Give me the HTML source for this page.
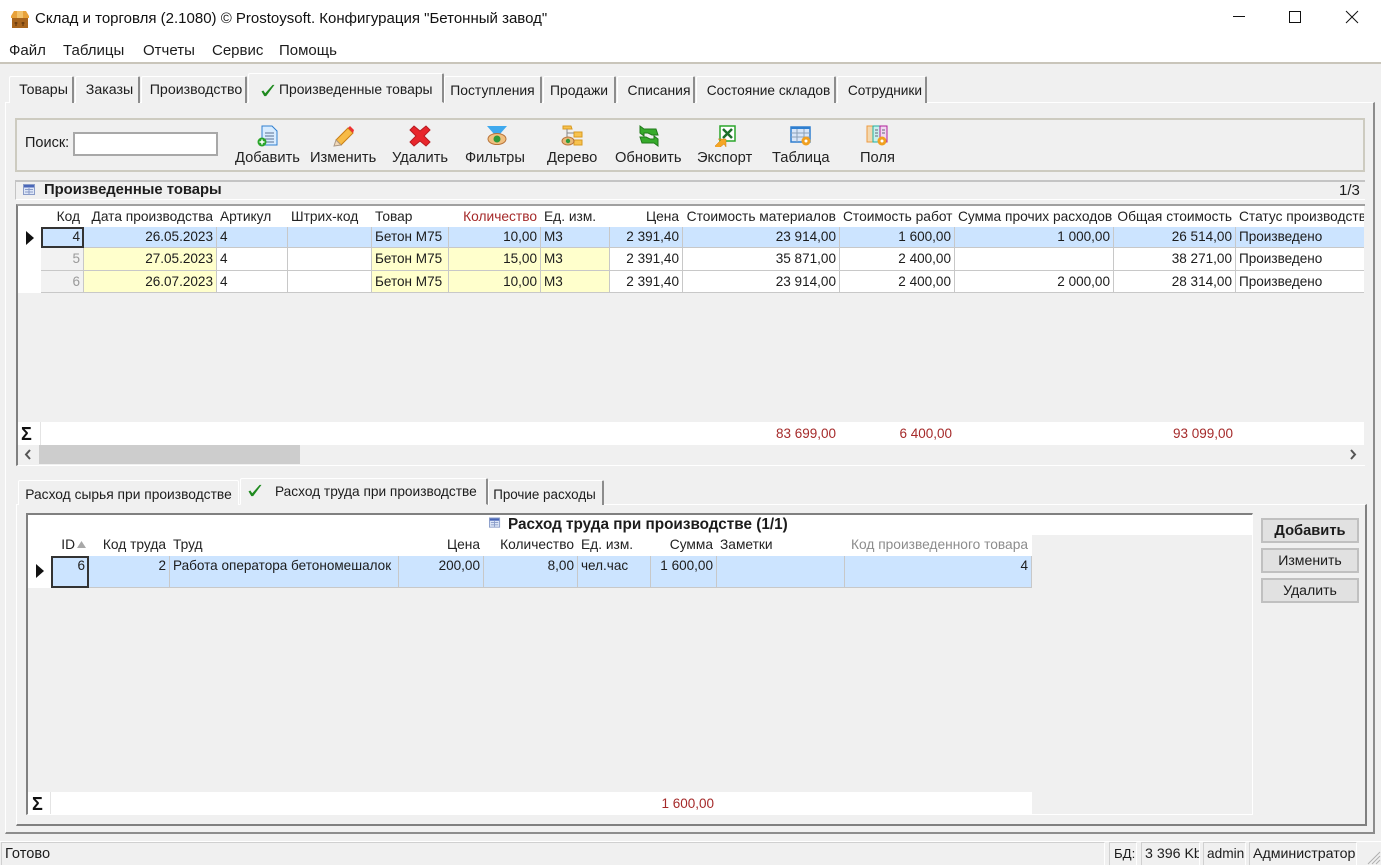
<!DOCTYPE html>
<html lang="ru"><head><meta charset="utf-8"><title>Склад и торговля</title>
<style>
html{margin:0;padding:0;background:#f0f0f0}
body{margin:0;padding:0;width:1381px;height:865px;position:relative;overflow:hidden;background:#f0f0f0;font:13.7px/15px "Liberation Sans",sans-serif;color:#1c1c1c;filter:blur(.35px)}
.a{position:absolute;box-sizing:border-box}
.t{position:absolute;white-space:nowrap}
.tab{position:absolute;box-sizing:border-box;background:#f0f0f0;border-top:1px solid #fff;border-left:1px solid #fff;border-right:2px solid #8c8c8c;border-radius:2px 2px 0 0;text-align:center;white-space:nowrap;overflow:hidden;font-size:13.9px;line-height:27px}
table{position:absolute;border-collapse:separate;border-spacing:0;table-layout:fixed;font:13.55px/15px "Liberation Sans",sans-serif;color:#1c1c1c}
td,th{padding:0 3px;overflow:hidden;white-space:nowrap;font-weight:normal;box-sizing:border-box;vertical-align:top}
th{background:#fff;text-align:left;padding-top:3px;color:#222;font-size:13.75px}
th.r{padding-right:4px}
td{background:#fff;border-right:1px solid #c8c8c8;border-bottom:1px solid #c8c8c8;padding-top:2px}
.d td{padding-top:3px}
.r{text-align:right}
tr.s td{background:#cce4ff}
td.y{background:#ffffcc}
td.k{background:#f2f2f2;color:#9a9a9a}
td.c{background:#cce4ff;color:#222;outline:2px solid #333;outline-offset:-2px}
.red{color:#a52a2a;font-size:13.5px}
.btn{position:absolute;left:1261px;width:98px;height:25px;box-sizing:border-box;background:#e1e1e1;border:2px solid #c0c0c0;text-align:center;line-height:21px;font-size:14.1px}
.tb{position:absolute;top:150px;white-space:nowrap;font-size:14.7px;line-height:16px;text-align:center;color:#222}
.ico{position:absolute;top:125px;width:22px;height:22px}
.st{position:absolute;top:842px;height:23px;box-sizing:border-box;border:1px solid #d0d0d0;border-bottom:0;border-right-color:#fff;line-height:22px;padding-left:3px;white-space:nowrap;overflow:hidden;font-size:14.2px}
.m{position:absolute;top:42px;font-size:15px;line-height:17px;white-space:nowrap}
.sig{position:absolute;font-size:18px;line-height:20px;color:#111;font-weight:bold}
</style></head><body>

<div class="a" style="left:0;top:0;width:1381px;height:62px;background:#fff"></div>
<div class="a" style="left:0;top:62px;width:1381px;height:2px;background:#c9c5ba"></div>
<svg class="a" style="left:9px;top:10px" width="22" height="19" viewBox="0 0 22 19"><path d="M2 6 5 1h12l3 5v2H2z" fill="#e8a23a"/><path d="M3 8h16v10H3z" fill="#a8641c"/><path d="M8 1h6v7H8z" fill="#f3c26a"/><path d="M7 12v4M5.500 13h3M14 12v4M12.500 13h3" stroke="#5a3008" stroke-width="1"/></svg>
<div class="t" style="left:35px;top:10px;font-size:15px;line-height:17px;color:#111">Склад и торговля (2.1080) © Prostoysoft. Конфигурация "Бетонный завод"</div>
<svg class="a" style="left:1230px;top:8px" width="140" height="18" viewBox="0 0 140 18" fill="none" stroke="#111" stroke-width="1"><path d="M3 8.500h12"/><path d="M59.500 3.500h11v11h-11z"/><path d="M116 3l12 12M128 3l-12 12"/></svg>

<div class="m" style="left:9px">Файл</div>
<div class="m" style="left:63px">Таблицы</div>
<div class="m" style="left:143px">Отчеты</div>
<div class="m" style="left:212px">Сервис</div>
<div class="m" style="left:279px">Помощь</div>

<div class="a" style="left:5px;top:102px;width:1370px;height:732px;background:#f0f0f0;border-top:1px solid #fff;border-left:1px solid #fff;border-right:2px solid #8c8c8c;border-bottom:2px solid #8c8c8c"></div>

<div class="tab" style="left:9px;top:76px;width:65px;height:27px;font-size:14.2px;padding-left:5px">Товары</div>
<div class="tab" style="left:75px;top:76px;width:65px;height:27px;font-size:14.2px;padding-left:5px">Заказы</div>
<div class="tab" style="left:141px;top:76px;width:106px;height:27px;font-size:14.2px;padding-left:5px">Производство</div>
<div class="tab" style="left:248px;top:73px;width:196px;height:30px;line-height:31px;border-bottom:1px solid #f0f0f0;text-align:left;padding-left:30px">Произведенные товары</div>
<svg class="a" style="left:261px;top:84px" width="14" height="13" viewBox="0 0 14 14"><path d="M0 8l2-1 2 3 8-9 2 0-9 12H3z" fill="#1f8a1f"/></svg>
<div class="tab" style="left:444px;top:76px;width:98px;height:27px">Поступления</div>
<div class="tab" style="left:543px;top:76px;width:73px;height:27px">Продажи</div>
<div class="tab" style="left:617px;top:76px;width:78px;height:27px;padding-left:7px">Списания</div>
<div class="tab" style="left:696px;top:76px;width:140px;height:27px;padding-left:6px;font-size:13.7px">Состояние складов</div>
<div class="tab" style="left:837px;top:76px;width:90px;height:27px;padding-left:7px;font-size:13.7px">Сотрудники</div>

<div class="a" style="left:15px;top:118px;width:1350px;height:54px;border:2px solid #cdcbc0"></div>
<div class="t" style="left:25px;top:136px;font-size:14.5px">Поиск:</div>
<div class="a" style="left:73px;top:132px;width:145px;height:24px;background:#fff;border:2px solid #a8a8a8"></div>

<svg class="ico" style="left:257px" viewBox="0 0 22 22"><path d="M5 1h10l5 5v14H5z" fill="#d8ecff" stroke="#2f7fd0"/><path d="M8 8h9M8 11h9M8 14h9M8 17h9" stroke="#5a6f90"/><circle cx="5" cy="17" r="4.500" fill="#2aa52a"/><path d="M5 14.500v5M2.500 17h5" stroke="#fff" stroke-width="1.500"/></svg>
<svg class="ico" style="left:333px" viewBox="0 0 22 22"><path d="M3 15 15 3l5 5L8 20z" fill="#f7bb46" stroke="#c97e15"/><path d="M15 3l2-2 4 4-1 3z" fill="#e33"/><path d="M3 15l-2 6 7-1z" fill="#f2d9b8" stroke="#a98"/></svg>
<svg class="ico" style="left:409px" viewBox="0 0 22 22"><path d="M5 1l6 5 6-5 4 4-6 6 6 6-4 4-6-5-6 5-4-4 6-6-6-6z" fill="#e8262c" stroke="#b81a20"/></svg>
<svg class="ico" style="left:486px" viewBox="0 0 22 22"><path d="M1 1h20l-7 8H8z" fill="#3fa9ee"/><ellipse cx="11" cy="14" rx="9" ry="5.500" fill="#f0c080" stroke="#b8733a"/><circle cx="11" cy="14" r="3.500" fill="#2f9a3a"/></svg>
<svg class="ico" style="left:561px" viewBox="0 0 22 22"><path d="M2 1h8l1 3H2zM13 7h8v5h-8zM13 15h8v5h-8z" fill="#f7c24e" stroke="#d99a20"/><path d="M6 4v8M6 8h7M10 17h3" stroke="#888"/><ellipse cx="7" cy="16" rx="6" ry="4" fill="#e9b97a" stroke="#b8733a"/><circle cx="7" cy="16" r="2.200" fill="#2f9a3a"/></svg>
<svg class="ico" style="left:638px" viewBox="0 0 22 22"><path d="M2 1l4 3h12l2 6h-6l-4-2H6v3L2 8z" fill="#37ab2c" stroke="#207a1a"/><path d="M20 21l-4-3H4L2 12h6l4 2h4v-3l4 3z" fill="#37ab2c" stroke="#207a1a"/></svg>
<svg class="ico" style="left:714px" viewBox="0 0 22 22"><path d="M6 1h15v15H6z" fill="#fff" stroke="#2aa52a" stroke-width="1.500"/><path d="M9 4l9 9M18 4l-9 9" stroke="#1d6f2a" stroke-width="2.500"/><path d="M1 21l6-6-3-1h8v8l-2-3-6 5z" fill="#f5a623" stroke="#d07c10" stroke-width=".5"/></svg>
<svg class="ico" style="left:790px" viewBox="0 0 22 22"><path d="M1 2h19v15H1z" fill="#d8e6f8" stroke="#2f7fd0" stroke-width="1.500"/><path d="M1 2h19v2H1z" fill="#2f7fd0"/><path d="M7 4v13M14 4v13M1 8h19M1 12h19" stroke="#8aa0b8"/><circle cx="16" cy="16" r="4.500" fill="#f0a020"/><circle cx="16" cy="16" r="1.500" fill="#fff"/></svg>
<svg class="ico" style="left:866px" viewBox="0 0 22 22"><path d="M1 1h20v16H1z" fill="#eef6f6"/><path d="M1 1h6v16H1z" fill="#f3d8b0" stroke="#ee9a40"/><path d="M7 1h7v16H7z" fill="#c8f0ec" stroke="#20b0a0"/><path d="M14 1h7v16h-7z" fill="#f0d8f0" stroke="#b0209a"/><path d="M9 5h3M9 8h3M9 11h3M16 5h3M16 8h3" stroke="#667"/><circle cx="16" cy="16" r="4.500" fill="#f0a020"/><circle cx="16" cy="16" r="1.500" fill="#fff"/></svg>

<div class="tb" style="left:235px">Добавить</div>
<div class="tb" style="left:310px">Изменить</div>
<div class="tb" style="left:392px">Удалить</div>
<div class="tb" style="left:465px">Фильтры</div>
<div class="tb" style="left:547px">Дерево</div>
<div class="tb" style="left:615px">Обновить</div>
<div class="tb" style="left:697px">Экспорт</div>
<div class="tb" style="left:772px">Таблица</div>
<div class="tb" style="left:860px">Поля</div>

<div class="a" style="left:15px;top:180px;width:1350px;height:20px;border-top:2px solid #c4c4c4;border-left:1px solid #c4c4c4;border-bottom:1px solid #fff"></div>
<svg class="a" style="left:23px;top:184px" width="13" height="12" viewBox="0 0 13 12"><path d="M.5.500h11v10H.5z" fill="#dde6f7" stroke="#8a9cc8"/><path d="M1 1h10v2.500H1z" fill="#4a67b8"/><path d="M2 5.500h8M2 8h8M6 4v6" stroke="#8a9cc8"/></svg>
<div class="t" style="left:44px;top:183px;font-weight:bold;font-size:14.8px">Произведенные товары</div>
<div class="t" style="left:1339px;top:183px;font-size:15px">1/3</div>

<!-- upper grid -->
<div class="a" style="left:16px;top:204px;width:1349px;height:262px;background:#f0f0f0;border-top:2px solid #a0a0a0;border-left:2px solid #808080;border-bottom:1px solid #fff"></div>
<div class="a" style="left:18px;top:206px;width:23px;height:87px;background:#fff"></div>
<svg class="a" style="left:26px;top:231px" width="9" height="14" viewBox="0 0 9 14"><path d="M0 0l8 7-8 7z" fill="#111"/></svg>
<div style="position:absolute;left:41px;top:206px;width:1323px;height:88px;overflow:hidden">
<table style="left:0;top:0;width:1324px">
<colgroup><col style="width:43px"><col style="width:133px"><col style="width:71px"><col style="width:84px"><col style="width:77px"><col style="width:92px"><col style="width:69px"><col style="width:73px"><col style="width:157px"><col style="width:115px"><col style="width:159px"><col style="width:122px"><col style="width:129px"></colgroup>
<tr style="height:21px"><th class="r">Код</th><th class="r">Дата производства</th><th>Артикул</th><th>Штрих-код</th><th>Товар</th><th class="r" style="color:#a52a2a">Количество</th><th>Ед. изм.</th><th class="r">Цена</th><th class="r">Стоимость материалов</th><th class="r">Стоимость работ</th><th class="r">Сумма прочих расходов</th><th class="r">Общая стоимость</th><th>Статус производства</th></tr>
<tr class="s" style="height:21px"><td class="r c">4</td><td class="r">26.05.2023</td><td>4</td><td></td><td>Бетон М75</td><td class="r">10,00</td><td>М3</td><td class="r">2 391,40</td><td class="r">23 914,00</td><td class="r">1 600,00</td><td class="r">1 000,00</td><td class="r">26 514,00</td><td>Произведено</td></tr>
<tr class="d" style="height:23px"><td class="r k">5</td><td class="r y">27.05.2023</td><td>4</td><td></td><td class="y">Бетон М75</td><td class="r y">15,00</td><td class="y">М3</td><td class="r">2 391,40</td><td class="r">35 871,00</td><td class="r">2 400,00</td><td></td><td class="r">38 271,00</td><td>Произведено</td></tr>
<tr class="d" style="height:22px"><td class="r k">6</td><td class="r y">26.07.2023</td><td>4</td><td></td><td class="y">Бетон М75</td><td class="r y">10,00</td><td class="y">М3</td><td class="r">2 391,40</td><td class="r">23 914,00</td><td class="r">2 400,00</td><td class="r">2 000,00</td><td class="r">28 314,00</td><td>Произведено</td></tr>
</table></div>

<div class="a" style="left:18px;top:422px;width:1346px;height:23px;background:#fff;border-left:0"></div>
<div class="a" style="left:40px;top:422px;width:1px;height:23px;background:#e4e4e4"></div>
<div class="sig" style="left:21px;top:424px">Σ</div>
<div class="t red" style="left:682px;top:426px;width:154px;text-align:right">83 699,00</div>
<div class="t red" style="left:840px;top:426px;width:112px;text-align:right">6 400,00</div>
<div class="t red" style="left:1114px;top:426px;width:119px;text-align:right">93 099,00</div>
<div class="a" style="left:39px;top:445px;width:261px;height:19px;background:#cdcdcd"></div>
<svg class="a" style="left:23px;top:449px" width="10" height="11" viewBox="0 0 10 11" fill="none" stroke="#555" stroke-width="2"><path d="M7 1 3 5.500 7 10"/></svg>
<svg class="a" style="left:1348px;top:449px" width="10" height="11" viewBox="0 0 10 11" fill="none" stroke="#555" stroke-width="2"><path d="M3 1l4 4.500L3 10"/></svg>

<!-- lower tabs -->
<div class="a" style="left:16px;top:504px;width:1351px;height:322px;border-top:1px solid #fff;border-left:1px solid #fff;border-right:2px solid #808080;border-bottom:2px solid #808080"></div>
<div class="tab" style="left:18px;top:480px;width:221px;height:25px;line-height:27px;border-right:1px solid #fff;font-size:13.8px">Расход сырья при производстве</div>
<div class="tab" style="left:240px;top:478px;width:248px;height:27px;line-height:26px;border-bottom:1px solid #f0f0f0;text-align:left;padding-left:34px;font-size:13.7px">Расход труда при производстве</div>
<svg class="a" style="left:248px;top:484px" width="14" height="13" viewBox="0 0 14 14"><path d="M0 8l2-1 2 3 8-9 2 0-9 12H3z" fill="#1f8a1f"/></svg>
<div class="tab" style="left:488px;top:480px;width:116px;height:25px;line-height:27px;padding-right:2px;font-size:13.4px">Прочие расходы</div>

<div class="a" style="left:26px;top:513px;width:1227px;height:302px;background:#f0f0f0;border-top:2px solid #808080;border-left:2px solid #808080;border-right:1px solid #fff;border-bottom:1px solid #fff"></div>
<div class="a" style="left:28px;top:515px;width:1224px;height:20px;background:#fff"></div>
<div class="a" style="left:28px;top:535px;width:23px;height:53px;background:#fff"></div>
<svg class="a" style="left:489px;top:517px" width="12" height="12" viewBox="0 0 13 12"><path d="M.5.500h11v10H.5z" fill="#dde6f7" stroke="#8a9cc8"/><path d="M1 1h10v2.500H1z" fill="#4a67b8"/><path d="M2 5.500h8M2 8h8M6 4v6" stroke="#8a9cc8"/></svg>
<div class="t" style="left:508px;top:517px;font-weight:bold;font-size:15.3px">Расход труда при производстве (1/1)</div>
<svg class="a" style="left:36px;top:564px" width="9" height="14" viewBox="0 0 9 14"><path d="M0 0l8 7-8 7z" fill="#111"/></svg>
<table style="left:51px;top:534px;width:981px">
<colgroup><col style="width:38px"><col style="width:81px"><col style="width:229px"><col style="width:85px"><col style="width:94px"><col style="width:73px"><col style="width:66px"><col style="width:128px"><col style="width:187px"></colgroup>
<tr style="height:22px"><th class="r" style="padding-right:14px;color:#222">ID</th><th class="r">Код труда</th><th>Труд</th><th class="r">Цена</th><th class="r">Количество</th><th>Ед. изм.</th><th class="r">Сумма</th><th>Заметки</th><th class="r" style="color:#8c8c8c">Код произведенного товара</th></tr>
<tr class="s" style="height:32px"><td class="r c">6</td><td class="r">2</td><td>Работа оператора бетономешалок</td><td class="r">200,00</td><td class="r">8,00</td><td>чел.час</td><td class="r">1 600,00</td><td></td><td class="r">4</td></tr>
</table>
<svg class="a" style="left:76px;top:540px" width="11" height="9" viewBox="0 0 11 9"><path d="M5.500 1 10 8H1z" fill="#a8a8a8"/></svg>
<div class="a" style="left:28px;top:792px;width:1004px;height:22px;background:#fff"></div>
<div class="a" style="left:50px;top:792px;width:1px;height:22px;background:#e4e4e4"></div>
<div class="sig" style="left:32px;top:794px">Σ</div>
<div class="t red" style="left:651px;top:796px;width:63px;text-align:right">1 600,00</div>

<div class="btn" style="top:518px;font-weight:bold;font-size:14.7px;line-height:23px">Добавить</div>
<div class="btn" style="top:548px">Изменить</div>
<div class="btn" style="top:578px">Удалить</div>

<!-- status bar -->
<div class="a" style="left:0;top:841px;width:1381px;height:1px;background:#fff"></div>
<div class="st" style="left:1px;width:1104px;font-size:14.6px">Готово</div>
<div class="st" style="left:1109px;width:28px;font-size:13.2px;padding-left:4px">БД:</div>
<div class="st" style="left:1141px;width:59px">3 396 Kb</div>
<div class="st" style="left:1203px;width:43px;font-size:13.7px">admin</div>
<div class="st" style="left:1249px;width:108px">Администратор</div>
<svg class="a" style="left:1366px;top:850px" width="15" height="15" viewBox="0 0 15 15" stroke="#b0b0b0"><path d="M14 2 2 14M14 6 6 14M14 10l-4 4"/></svg>
</body></html>
